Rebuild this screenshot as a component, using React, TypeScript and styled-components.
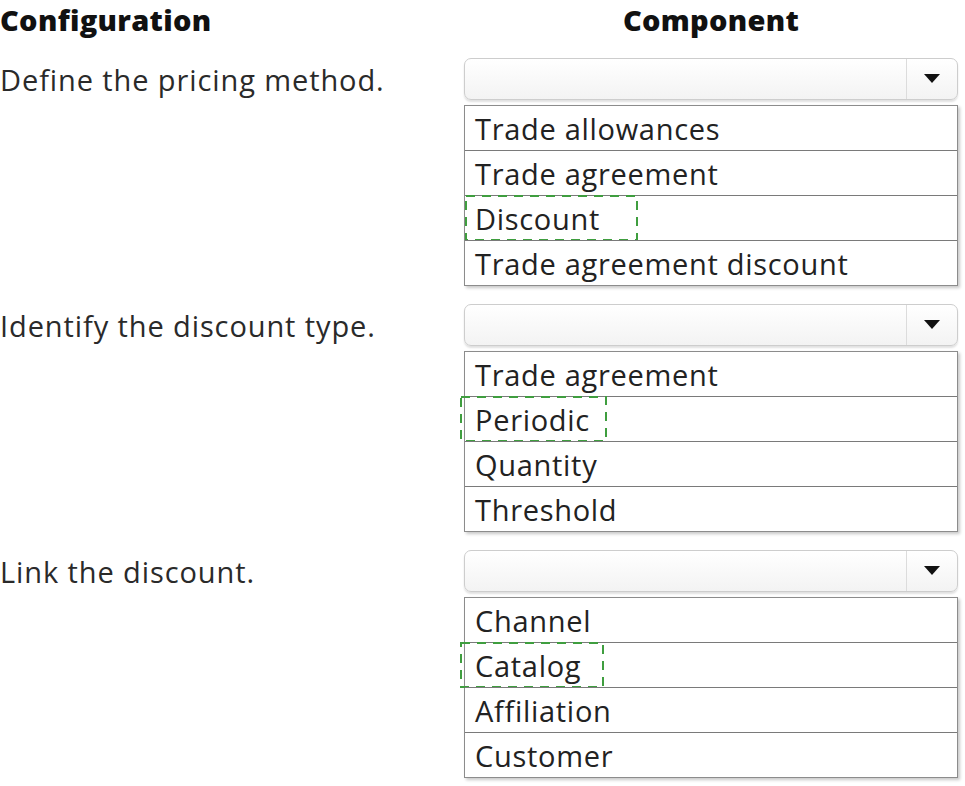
import React from 'react';
import styled, { createGlobalStyle } from 'styled-components';

const GlobalStyle = createGlobalStyle`
    html, body {
        margin: 0;
        padding: 0;
        background: #ffffff;
    }
    body {
        font-family: "Open Sans", "Noto Sans", "Liberation Sans", sans-serif;
        color: #222;
    }
`;

interface Option {
    label: string;
    mark?: { left: number; width: number };
}

interface Item {
    label: string;
    options: Option[];
}

const items: Item[] = [
    {
        label: 'Define the pricing method.',
        options: [
            { label: 'Trade allowances' },
            { label: 'Trade agreement' },
            { label: 'Discount', mark: { left: 0, width: 173 } },
            { label: 'Trade agreement discount' },
        ],
    },
    {
        label: 'Identify the discount type.',
        options: [
            { label: 'Trade agreement' },
            { label: 'Periodic', mark: { left: -5, width: 147 } },
            { label: 'Quantity' },
            { label: 'Threshold' },
        ],
    },
    {
        label: 'Link the discount.',
        options: [
            { label: 'Channel' },
            { label: 'Catalog', mark: { left: -5, width: 144 } },
            { label: 'Affiliation' },
            { label: 'Customer' },
        ],
    },
];

const Page = styled.div`
    width: 965px;
    height: 786px;
    overflow: hidden;
`;

const Grid = styled.div`
    display: grid;
    grid-template-columns: 464px 494px;
`;

const Header = styled(Grid)`
    height: 58px;
    align-items: start;
`;

const HeadCell = styled.div<{ $center?: boolean }>`
    font-weight: 800;
    font-size: 29px;
    line-height: 40px;
    letter-spacing: 0.3px;
    color: #111;
    text-align: ${props => (props.$center ? 'center' : 'left')};
`;

const Sections = styled.div`
    display: flex;
    flex-direction: column;
    gap: 18px;
`;

const Label = styled.div`
    height: 42px;
    display: flex;
    align-items: center;
    font-size: 29px;
    letter-spacing: 0.9px;
    color: #2a2a2a;
    white-space: nowrap;
`;

const Column = styled.div`
    display: flex;
    flex-direction: column;
    gap: 5px;
`;

const Select = styled.div`
    height: 42px;
    box-sizing: border-box;
    border: 1px solid #cdcdcd;
    border-radius: 7px;
    background: linear-gradient(#ffffff, #f3f3f3);
    box-shadow: 0 2px 2px rgba(0, 0, 0, 0.12);
    display: flex;
`;

const SelectField = styled.div`
    flex: 1;
`;

const SelectButton = styled.div`
    width: 50px;
    border-left: 1px solid #dcdcdc;
    display: flex;
    align-items: center;
    justify-content: center;
`;

const List = styled.div`
    border: 1px solid #8c8c8c;
    box-shadow: 2px 2px 3px rgba(0, 0, 0, 0.22);
    background: #fff;
`;

const Row = styled.div`
    position: relative;
    height: 44px;
    box-sizing: border-box;
    display: flex;
    align-items: center;
    padding-left: 10px;
    font-size: 29px;
    letter-spacing: 0.7px;
    color: #222;
    white-space: nowrap;
    & + & {
        border-top: 1px solid #7a7a7a;
        height: 45px;
    }
`;

const Mark = styled.svg<{ $left: number; $width: number }>`
    position: absolute;
    top: -1px;
    left: ${props => props.$left}px;
    width: ${props => props.$width}px;
    height: 46px;
    pointer-events: none;
    overflow: visible;
`;

const Arrow = () => (
    <svg width="16" height="10" viewBox="0 0 16 10">
        <path d="M0 0 L16 0 L8 9 Z" fill="#111" />
    </svg>
);

const DashedBox = ({ left, width }: { left: number; width: number }) => (
    <Mark $left={left} $width={width}>
        <rect
            x="1"
            y="1"
            width={width - 2}
            height="44"
            fill="none"
            stroke="#3f9e3f"
            strokeWidth="2"
            strokeDasharray="9 7"
        />
    </Mark>
);

const App = () => (
    <Page>
        <GlobalStyle />
        <Header>
            <HeadCell>Configuration</HeadCell>
            <HeadCell $center>Component</HeadCell>
        </Header>
        <Sections>
            {items.map(item => (
                <Grid key={item.label}>
                    <Label>{item.label}</Label>
                    <Column>
                        <Select>
                            <SelectField />
                            <SelectButton>
                                <Arrow />
                            </SelectButton>
                        </Select>
                        <List>
                            {item.options.map(opt => (
                                <Row key={opt.label}>
                                    {opt.label}
                                    {opt.mark && <DashedBox left={opt.mark.left} width={opt.mark.width} />}
                                </Row>
                            ))}
                        </List>
                    </Column>
                </Grid>
            ))}
        </Sections>
    </Page>
);

export default App;
